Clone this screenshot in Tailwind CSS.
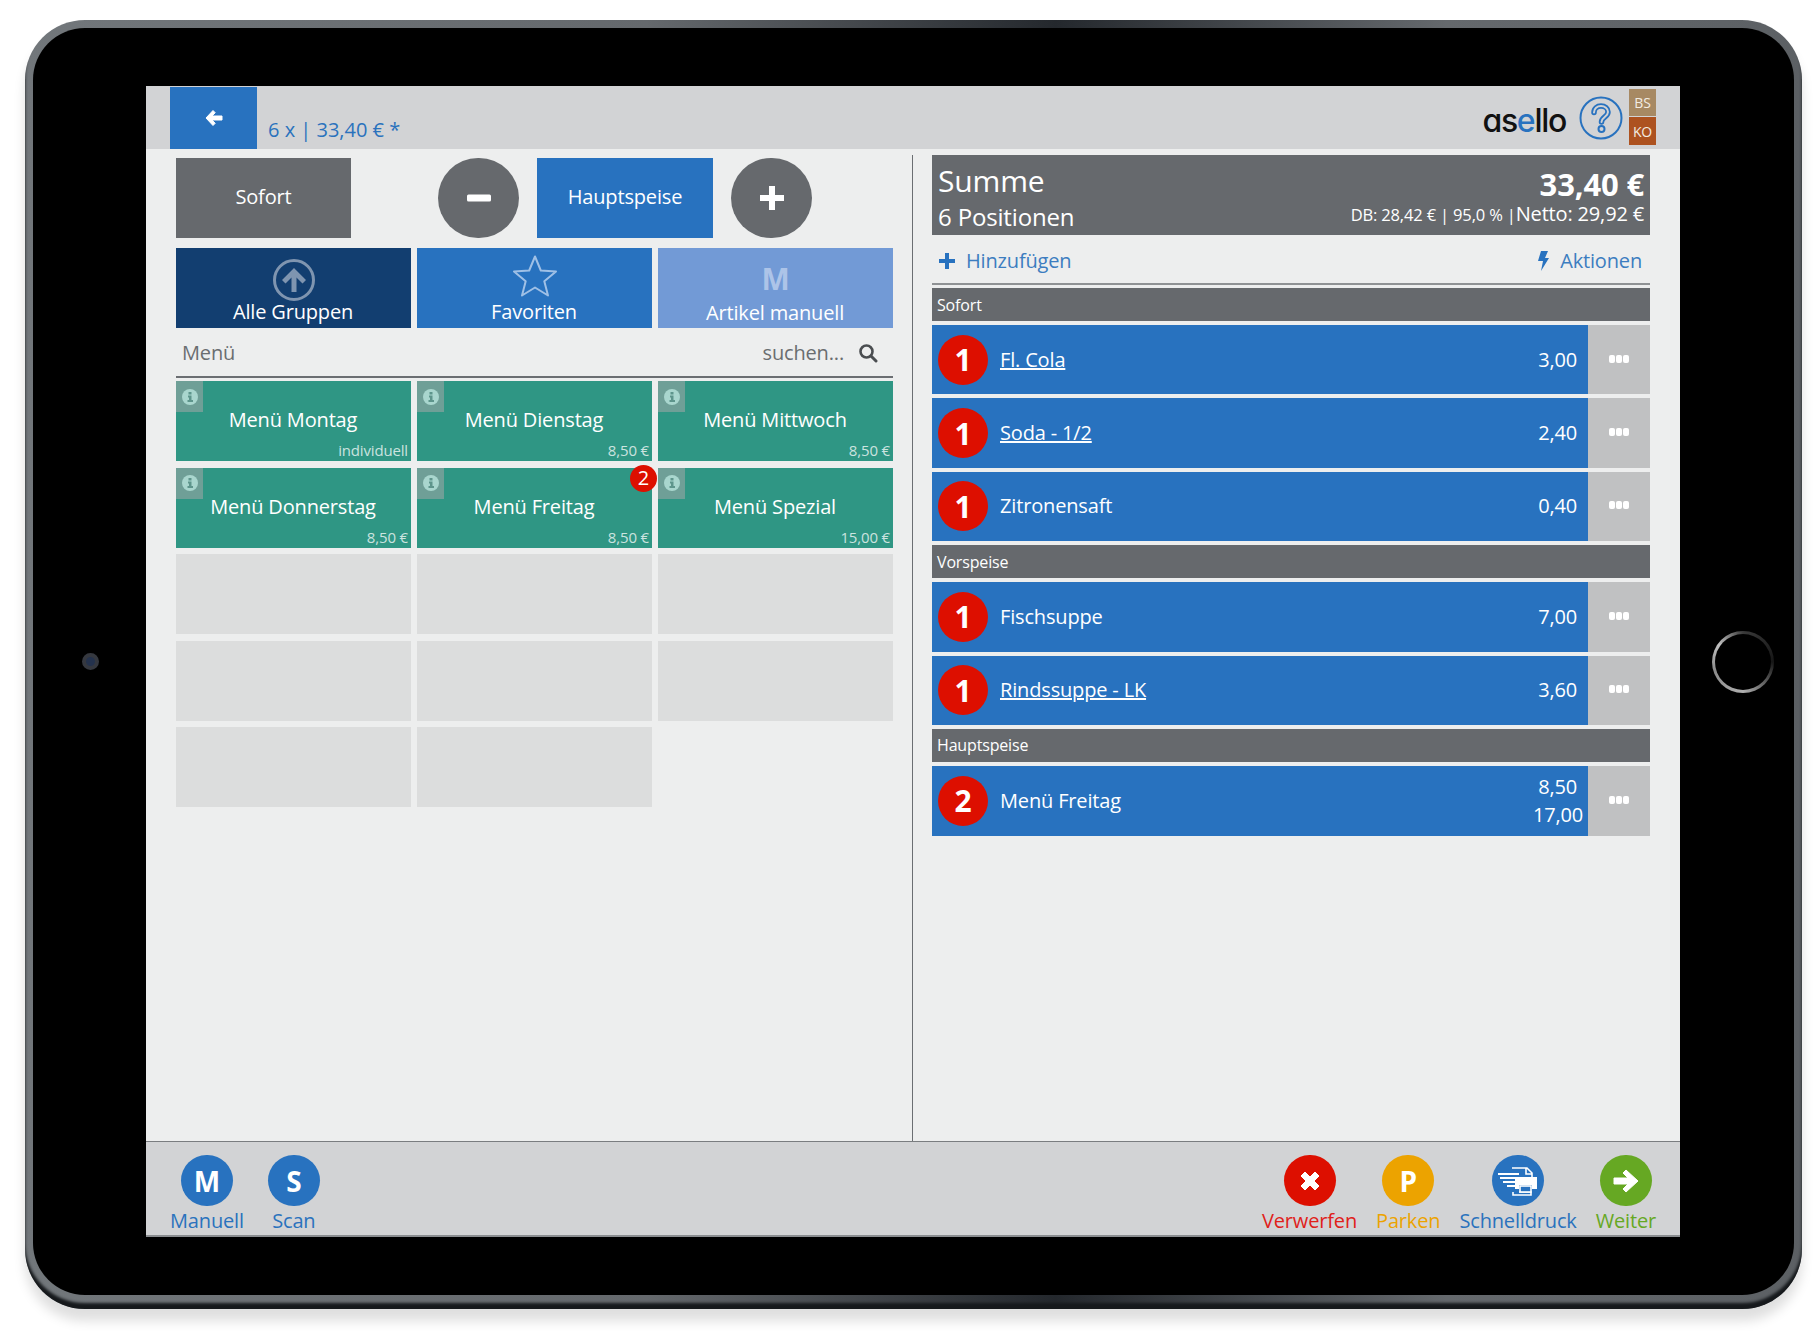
<!DOCTYPE html>
<html lang="de">
<head>
  <meta charset="UTF-8" />
  <title>asello Kasse</title>
  <script src="https://cdn.jsdelivr.net/npm/@tailwindcss/browser@4"></script>
</head>
<body class="bg-white font-['Open_Sans',sans-serif] text-[20px] tracking-[-0.008em] w-[1815px] h-[1331px] overflow-hidden pt-[20px] pl-[25px]">
  <!-- tablet frame -->
  <div class="w-[1777px] h-[1289px] rounded-[60px] p-[8px] pb-[14px] bg-[linear-gradient(90deg,#72777b,#65696d_35%,#24282d_58%,#65696d_80%,#5c6064)] shadow-[inset_0_-6px_3px_#16191c,0_12px_12px_rgba(0,0,0,0.13)]">
    <div class="h-full rounded-[52px] bg-black flex items-center">
      <div class="w-[113px] flex justify-center">
        <div class="w-[17px] h-[17px] ml-[2px] rounded-full bg-[#24324d] border-[4px] border-[#35383f]"></div>
      </div>

      <!-- screen -->
      <div class="w-[1534px] h-[1151px] flex flex-col bg-[#edeeee]">
        <!-- header -->
        <div class="h-[63px] bg-[#d2d3d5] flex items-start pl-[24px] pr-[24px]">
          <div class="w-[87px] h-[62px] mt-[1px] bg-[#2872bf] flex items-center justify-center">
            <svg width="20" height="20" viewBox="0 0 20 20"><path d="M9 2.500 2 10l7 7.500 2.200-2.200-3.200-3.300h10V8H8l3.200-3.300z" fill="#fff" stroke="#fff" stroke-width="1" stroke-linejoin="round"/></svg>
          </div>
          <div class="ml-[11px] mt-[30px] text-[#2a72bd] leading-[27px] tracking-normal">6 x | 33,40 € *</div>
          <div class="ml-auto mt-[16px] font-['Inter',sans-serif] font-medium text-[32px] leading-[38px] tracking-[-0.04em] [font-feature-settings:'cv11'] text-[#111]">as<span class="text-[#2872bf]">e</span>llo</div>
          <svg class="ml-[13px] mt-[10px]" width="44" height="44" viewBox="0 0 44 44" fill="none">
            <circle cx="22" cy="22" r="20.500" stroke="#2872bf" stroke-width="2"/>
            <path d="M15 16.500c0-4 3.200-6.500 7-6.500s7 2.500 7 6c0 5-6.500 5-6.500 10" stroke="#2872bf" stroke-width="5.500" stroke-linecap="round"/>
            <path d="M15 16.500c0-4 3.200-6.500 7-6.500s7 2.500 7 6c0 5-6.500 5-6.500 10" stroke="#d2d3d5" stroke-width="2" stroke-linecap="round"/>
            <circle cx="22.500" cy="33" r="3" fill="#d2d3d5" stroke="#2872bf" stroke-width="2"/>
          </svg>
          <div class="ml-[6px] mt-[3px] flex flex-col gap-[1px] text-[14px] text-[#f3ece2]">
            <div class="w-[27px] h-[27px] bg-[#a78963] flex items-center justify-center">BS</div>
            <div class="w-[27px] h-[28px] bg-[#ad5220] flex items-center justify-center">KO</div>
          </div>
        </div>

        <!-- main -->
        <div class="flex-1 flex pt-[6px]">
          <!-- left column -->
          <div class="w-[767px] border-r border-[#6b6e72] pl-[30px] pt-[3px]">
            <div class="flex h-[80px] text-white">
              <div class="w-[175px] bg-[#66696d] flex items-center justify-center pb-[2px]">Sofort</div>
              <div class="w-[81px] ml-[87px] rounded-full bg-[#66696d] flex items-center justify-center pb-[1px]">
                <svg width="24" height="8" viewBox="0 0 24 8"><rect width="24" height="7" y="0.500" rx="1.500" fill="#fff"/></svg>
              </div>
              <div class="w-[176px] ml-[18px] bg-[#2872bf] flex items-center justify-center pb-[2px]">Hauptspeise</div>
              <div class="w-[81px] ml-[18px] rounded-full bg-[#66696d] flex items-center justify-center pb-[1px]">
                <svg width="26" height="26" viewBox="0 0 26 26"><path d="M10 1h6v9h9v6h-9v9h-6v-9H1v-6h9z" fill="#fff"/></svg>
              </div>
            </div>

            <div class="grid grid-cols-[repeat(3,235px)] gap-[6px] mt-[10px] text-white">
              <div class="h-[80px] bg-[#123e70] flex flex-col items-center pt-[11px]">
                <svg width="42" height="42" viewBox="0 0 42 42" fill="none">
                  <circle cx="21" cy="21" r="19.500" stroke="#7f95b0" stroke-width="3"/>
                  <path d="M21 9 9 21l3.500 3.500 6-6V33h5V18.500l6 6L33 21z" fill="#7f95b0"/>
                </svg>
                <div class="leading-[26px] mt-[-2px] pr-[1px]">Alle Gruppen</div>
              </div>
              <div class="h-[80px] bg-[#2872bf] flex flex-col items-center pt-[6px]">
                <svg width="46" height="43" viewBox="0 0 46 43" fill="none"><path d="M23 2.500 28.800 16.500 44 17.500 32.300 27.300 36 41.500 23 33.500 10 41.500 13.700 27.300 2 17.500 17.200 16.500z" stroke="#9fc0e6" stroke-width="2" stroke-linejoin="round"/></svg>
                <div class="leading-[26px] mt-[2px] pr-[1px]">Favoriten</div>
              </div>
              <div class="h-[80px] bg-[#729ad6] flex flex-col items-center pt-[9px]">
                <div class="font-bold text-[30px] leading-[43px] text-[#adc4e8]">M</div>
                <div class="leading-[26px] pr-[1px]">Artikel manuell</div>
              </div>
            </div>

            <div class="w-[717px] h-[49px] mt-[1px] mb-[3px] border-b-2 border-[#6b6e72] flex items-center pl-[6px] pr-[15px] text-[#6a6d70]">
              <span>Menü</span>
              <span class="ml-auto">suchen...</span>
              <svg class="ml-[14px]" width="20" height="20" viewBox="0 0 20 20" fill="none"><circle cx="8.500" cy="8.500" r="6" stroke="#4a4d50" stroke-width="2.600"/><path d="m13 13 5 5" stroke="#4a4d50" stroke-width="3" stroke-linecap="round"/></svg>
            </div>

            <div class="grid grid-cols-[repeat(3,235px)] gap-x-[6px] gap-y-[6.500px] text-white">
              <div class="relative h-[80px] bg-[#2f9684] flex items-center justify-center">
                <div class="absolute left-0 top-0 w-[27px] h-[31px] bg-[#6f9f97] flex items-center justify-center"><svg width="16" height="16" viewBox="0 0 16 16"><circle cx="8" cy="8" r="8" fill="#a9d6ce"/><path d="M6.500 3h3v2.500h-3zM6 6.500h3.500V11H11v2H5.500v-2H7V8.500H6z" fill="#5e958c"/></svg></div>
                <span class="pb-[2px] pr-[1px]">Menü Montag</span>
                <span class="absolute right-[3px] bottom-[1px] text-[15px] leading-[20px] text-white/75">individuell</span>
              </div>
              <div class="relative h-[80px] bg-[#2f9684] flex items-center justify-center">
                <div class="absolute left-0 top-0 w-[27px] h-[31px] bg-[#6f9f97] flex items-center justify-center"><svg width="16" height="16" viewBox="0 0 16 16"><circle cx="8" cy="8" r="8" fill="#a9d6ce"/><path d="M6.500 3h3v2.500h-3zM6 6.500h3.500V11H11v2H5.500v-2H7V8.500H6z" fill="#5e958c"/></svg></div>
                <span class="pb-[2px] pr-[1px]">Menü Dienstag</span>
                <span class="absolute right-[3px] bottom-[1px] text-[15px] leading-[20px] text-white/75">8,50 €</span>
              </div>
              <div class="relative h-[80px] bg-[#2f9684] flex items-center justify-center">
                <div class="absolute left-0 top-0 w-[27px] h-[31px] bg-[#6f9f97] flex items-center justify-center"><svg width="16" height="16" viewBox="0 0 16 16"><circle cx="8" cy="8" r="8" fill="#a9d6ce"/><path d="M6.500 3h3v2.500h-3zM6 6.500h3.500V11H11v2H5.500v-2H7V8.500H6z" fill="#5e958c"/></svg></div>
                <span class="pb-[2px] pr-[1px]">Menü Mittwoch</span>
                <span class="absolute right-[3px] bottom-[1px] text-[15px] leading-[20px] text-white/75">8,50 €</span>
              </div>
              <div class="relative h-[80px] bg-[#2f9684] flex items-center justify-center">
                <div class="absolute left-0 top-0 w-[27px] h-[31px] bg-[#6f9f97] flex items-center justify-center"><svg width="16" height="16" viewBox="0 0 16 16"><circle cx="8" cy="8" r="8" fill="#a9d6ce"/><path d="M6.500 3h3v2.500h-3zM6 6.500h3.500V11H11v2H5.500v-2H7V8.500H6z" fill="#5e958c"/></svg></div>
                <span class="pb-[2px] pr-[1px]">Menü Donnerstag</span>
                <span class="absolute right-[3px] bottom-[1px] text-[15px] leading-[20px] text-white/75">8,50 €</span>
              </div>
              <div class="relative h-[80px] bg-[#2f9684] flex items-center justify-center">
                <div class="absolute left-0 top-0 w-[27px] h-[31px] bg-[#6f9f97] flex items-center justify-center"><svg width="16" height="16" viewBox="0 0 16 16"><circle cx="8" cy="8" r="8" fill="#a9d6ce"/><path d="M6.500 3h3v2.500h-3zM6 6.500h3.500V11H11v2H5.500v-2H7V8.500H6z" fill="#5e958c"/></svg></div>
                <span class="pb-[2px] pr-[1px]">Menü Freitag</span>
                <span class="absolute right-[3px] bottom-[1px] text-[15px] leading-[20px] text-white/75">8,50 €</span>
                <span class="absolute z-10 top-[-3px] right-[-5px] w-[27px] h-[27px] rounded-full bg-[#dd0f00] flex items-center justify-center">2</span>
              </div>
              <div class="relative h-[80px] bg-[#2f9684] flex items-center justify-center">
                <div class="absolute left-0 top-0 w-[27px] h-[31px] bg-[#6f9f97] flex items-center justify-center"><svg width="16" height="16" viewBox="0 0 16 16"><circle cx="8" cy="8" r="8" fill="#a9d6ce"/><path d="M6.500 3h3v2.500h-3zM6 6.500h3.500V11H11v2H5.500v-2H7V8.500H6z" fill="#5e958c"/></svg></div>
                <span class="pb-[2px] pr-[1px]">Menü Spezial</span>
                <span class="absolute right-[3px] bottom-[1px] text-[15px] leading-[20px] text-white/75">15,00 €</span>
              </div>
              <div class="h-[80px] bg-[#dcdddd]"></div>
              <div class="h-[80px] bg-[#dcdddd]"></div>
              <div class="h-[80px] bg-[#dcdddd]"></div>
              <div class="h-[80px] bg-[#dcdddd]"></div>
              <div class="h-[80px] bg-[#dcdddd]"></div>
              <div class="h-[80px] bg-[#dcdddd]"></div>
              <div class="h-[80px] bg-[#dcdddd]"></div>
              <div class="h-[80px] bg-[#dcdddd]"></div>
            </div>
          </div>

          <!-- right column -->
          <div class="w-[718px] ml-[19px]">
            <div class="h-[80px] bg-[#66696d] text-white flex justify-between px-[6px]">
              <div>
                <div class="text-[30px] leading-[42px] mt-[5px]">Summe</div>
                <div class="text-[24px] leading-[30px]">6 Positionen</div>
              </div>
              <div class="text-right">
                <div class="font-bold text-[31px] leading-[36px] mt-[11px]">33,40 €</div>
                <div class="leading-[24px]"><span class="text-[16.500px]">DB: 28,42 € | 95,0 % |</span>Netto: 29,92 €</div>
              </div>
            </div>

            <div class="h-[50px] pt-[4px] border-b-2 border-[#8f9294] flex items-center pl-[7px] pr-[8px] text-[#3c7dc0] mb-[3px]">
              <svg width="16" height="16" viewBox="0 0 16 16"><path d="M6 0h4v6h6v4h-6v6H6v-6H0V6h6z" fill="#2872bf"/></svg>
              <span class="ml-[11px]">Hinzufügen</span>
              <svg class="ml-auto" width="11" height="20" viewBox="0 0 11 20"><path d="M3 0h7L7 7h4L3 20l2-10H0z" fill="#2872bf"/></svg>
              <span class="ml-[11px]">Aktionen</span>
            </div>

            <div class="flex flex-col gap-[4px] text-white">
              <div class="h-[33px] bg-[#66696d] text-[16px] flex items-center pl-[5px]">Sofort</div>
              <div class="h-[69.400px] flex">
                <div class="flex-1 bg-[#2872bf] flex items-center pl-[6px] pr-[11px]">
                  <span class="w-[50px] h-[50px] rounded-full bg-[#dd0f00] font-bold text-[30px] flex items-center justify-center">1</span>
                  <span class="ml-[12px] underline">Fl. Cola</span>
                  <span class="ml-auto">3,00</span>
                </div>
                <div class="w-[62px] bg-[#c0c1c2] flex items-center justify-center gap-[1px] pb-[2px]"><i class="w-[6px] h-[8px] rounded-[2px] bg-white"></i><i class="w-[6px] h-[8px] rounded-[2px] bg-white"></i><i class="w-[6px] h-[8px] rounded-[2px] bg-white"></i></div>
              </div>
              <div class="h-[69.400px] flex">
                <div class="flex-1 bg-[#2872bf] flex items-center pl-[6px] pr-[11px]">
                  <span class="w-[50px] h-[50px] rounded-full bg-[#dd0f00] font-bold text-[30px] flex items-center justify-center">1</span>
                  <span class="ml-[12px] underline">Soda - 1/2</span>
                  <span class="ml-auto">2,40</span>
                </div>
                <div class="w-[62px] bg-[#c0c1c2] flex items-center justify-center gap-[1px] pb-[2px]"><i class="w-[6px] h-[8px] rounded-[2px] bg-white"></i><i class="w-[6px] h-[8px] rounded-[2px] bg-white"></i><i class="w-[6px] h-[8px] rounded-[2px] bg-white"></i></div>
              </div>
              <div class="h-[69.400px] flex">
                <div class="flex-1 bg-[#2872bf] flex items-center pl-[6px] pr-[11px]">
                  <span class="w-[50px] h-[50px] rounded-full bg-[#dd0f00] font-bold text-[30px] flex items-center justify-center">1</span>
                  <span class="ml-[12px]">Zitronensaft</span>
                  <span class="ml-auto">0,40</span>
                </div>
                <div class="w-[62px] bg-[#c0c1c2] flex items-center justify-center gap-[1px] pb-[2px]"><i class="w-[6px] h-[8px] rounded-[2px] bg-white"></i><i class="w-[6px] h-[8px] rounded-[2px] bg-white"></i><i class="w-[6px] h-[8px] rounded-[2px] bg-white"></i></div>
              </div>
              <div class="h-[33px] bg-[#66696d] text-[16px] flex items-center pl-[5px]">Vorspeise</div>
              <div class="h-[69.400px] flex">
                <div class="flex-1 bg-[#2872bf] flex items-center pl-[6px] pr-[11px]">
                  <span class="w-[50px] h-[50px] rounded-full bg-[#dd0f00] font-bold text-[30px] flex items-center justify-center">1</span>
                  <span class="ml-[12px]">Fischsuppe</span>
                  <span class="ml-auto">7,00</span>
                </div>
                <div class="w-[62px] bg-[#c0c1c2] flex items-center justify-center gap-[1px] pb-[2px]"><i class="w-[6px] h-[8px] rounded-[2px] bg-white"></i><i class="w-[6px] h-[8px] rounded-[2px] bg-white"></i><i class="w-[6px] h-[8px] rounded-[2px] bg-white"></i></div>
              </div>
              <div class="h-[69.400px] flex">
                <div class="flex-1 bg-[#2872bf] flex items-center pl-[6px] pr-[11px]">
                  <span class="w-[50px] h-[50px] rounded-full bg-[#dd0f00] font-bold text-[30px] flex items-center justify-center">1</span>
                  <span class="ml-[12px] underline">Rindssuppe - LK</span>
                  <span class="ml-auto">3,60</span>
                </div>
                <div class="w-[62px] bg-[#c0c1c2] flex items-center justify-center gap-[1px] pb-[2px]"><i class="w-[6px] h-[8px] rounded-[2px] bg-white"></i><i class="w-[6px] h-[8px] rounded-[2px] bg-white"></i><i class="w-[6px] h-[8px] rounded-[2px] bg-white"></i></div>
              </div>
              <div class="h-[33px] bg-[#66696d] text-[16px] flex items-center pl-[5px]">Hauptspeise</div>
              <div class="h-[70px] flex">
                <div class="flex-1 bg-[#2872bf] flex items-center pl-[6px] pr-[5px]">
                  <span class="w-[50px] h-[50px] rounded-full bg-[#dd0f00] font-bold text-[30px] flex items-center justify-center">2</span>
                  <span class="ml-[12px]">Menü Freitag</span>
                  <div class="ml-auto text-right leading-[28px]">
                    <div class="pr-[6px]">8,50</div>
                    <div>17,00</div>
                  </div>
                </div>
                <div class="w-[62px] bg-[#c0c1c2] flex items-center justify-center gap-[1px] pb-[2px]"><i class="w-[6px] h-[8px] rounded-[2px] bg-white"></i><i class="w-[6px] h-[8px] rounded-[2px] bg-white"></i><i class="w-[6px] h-[8px] rounded-[2px] bg-white"></i></div>
              </div>
            </div>
          </div>
        </div>

        <!-- footer -->
        <div class="h-[96px] bg-[#d2d3d5] border-t border-[#7a7d80] border-b-2 border-b-[#8a8d90] flex justify-between pl-[24px] pr-[24px] pt-[13px]">
          <div class="flex gap-[24px] text-[#2a72bd]">
            <div class="flex flex-col items-center">
              <div class="w-[52px] h-[52px] rounded-full bg-[#2872bf] text-white font-bold text-[28px] flex items-center justify-center">M</div>
              <div class="leading-[28px] mt-[1px]">Manuell</div>
            </div>
            <div class="flex flex-col items-center">
              <div class="w-[52px] h-[52px] rounded-full bg-[#2872bf] text-white font-bold text-[28px] flex items-center justify-center">S</div>
              <div class="leading-[28px] mt-[1px]">Scan</div>
            </div>
          </div>
          <div class="flex gap-[19px]">
            <div class="flex flex-col items-center text-[#e0211a]">
              <div class="w-[52px] h-[52px] rounded-full bg-[#dd0f00] flex items-center justify-center">
                <svg width="22" height="22" viewBox="0 0 22 22"><path d="M2 6l4-4 5 5 5-5 4 4-5 5 5 5-4 4-5-5-5 5-4-4 5-5z" fill="#fff" stroke="#fff" stroke-linejoin="round"/></svg>
              </div>
              <div class="leading-[28px] mt-[1px]">Verwerfen</div>
            </div>
            <div class="flex flex-col items-center text-[#eca300]">
              <div class="w-[52px] h-[52px] rounded-full bg-[#eca300] text-white font-bold text-[28px] flex items-center justify-center">P</div>
              <div class="leading-[28px] mt-[1px]">Parken</div>
            </div>
            <div class="flex flex-col items-center text-[#2a72bd]">
              <div class="w-[52px] h-[52px] rounded-full bg-[#2872bf] flex items-center justify-center">
                <svg width="42" height="32" viewBox="0 0 42 32" fill="none" stroke="#fff" stroke-width="1.600">
                  <path d="M15 3h15l5 5v8M29 3v6h6M22 27h12v3H16v-3"/>
                  <path d="M1 9h21M3 13h19M6 17h12M10 21h8" stroke-width="1.800"/>
                  <path d="M18 12h22v12h-5v-4H22v4h-4z" fill="#fff" stroke="none"/>
                  <rect x="23" y="21" width="11" height="6" fill="#2872bf"/>
                </svg>
              </div>
              <div class="leading-[28px] mt-[1px]">Schnelldruck</div>
            </div>
            <div class="flex flex-col items-center text-[#66a823]">
              <div class="w-[52px] h-[52px] rounded-full bg-[#66a823] flex items-center justify-center">
                <svg width="26" height="24" viewBox="0 0 26 24"><path d="M13 1l-3 3 5 5H1v6h14l-5 5 3 3 12-11z" fill="#fff" stroke="#fff" stroke-linejoin="round"/></svg>
              </div>
              <div class="leading-[28px] mt-[1px]">Weiter</div>
            </div>
          </div>
        </div>
      </div>

      <div class="flex-1 flex justify-center">
        <div class="w-[62px] h-[62px] ml-[12px] rounded-full p-[3px] bg-[conic-gradient(#3a3a3a,#161616_25%,#b0b0b0_50%,#8a8a8a_70%,#c0c0c0_85%,#3a3a3a)]">
          <div class="w-full h-full rounded-full bg-black"></div>
        </div>
      </div>
    </div>
  </div>
</body>
</html>
